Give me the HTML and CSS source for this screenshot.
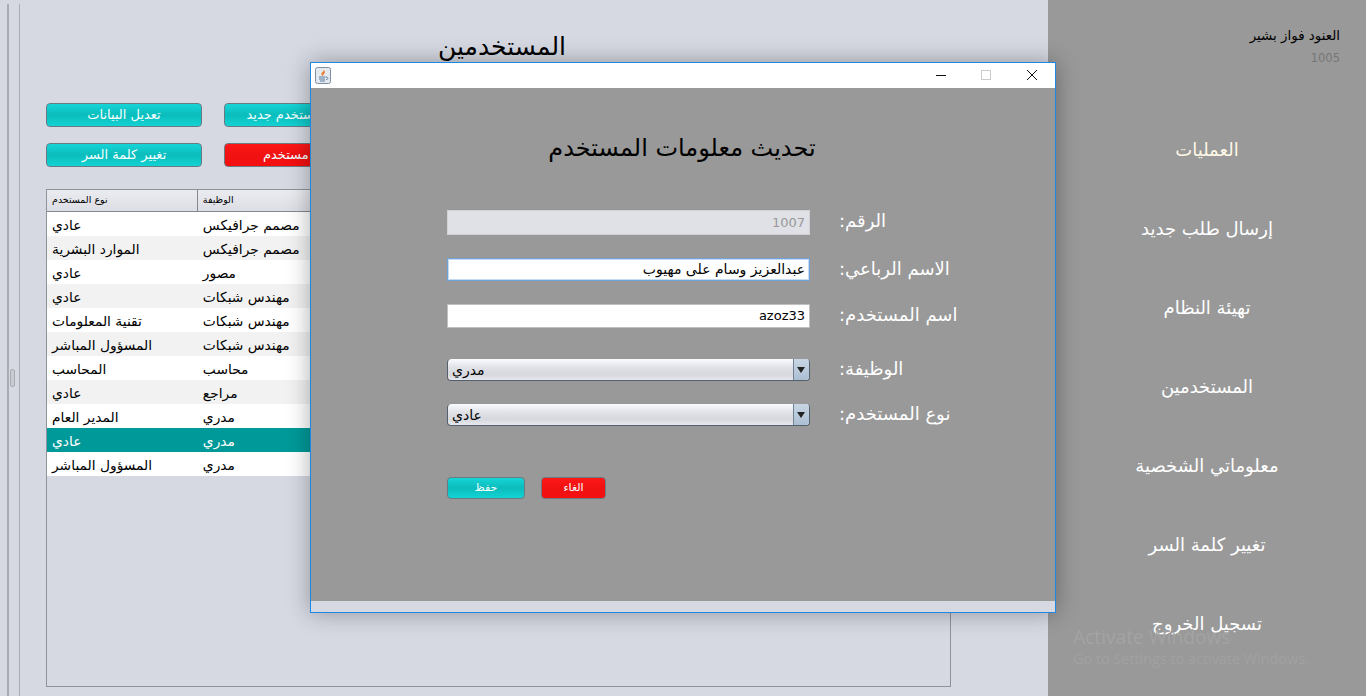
FILE: index.html
```html
<!DOCTYPE html>
<html lang="ar">
<head>
<meta charset="utf-8">
<title>المستخدمين</title>
<link rel="stylesheet" href="styles.css">
</head>
<body>
<div class="app">
  <div class="strip"><span class="grip"></span></div>
  <main class="main">
    <h1 class="page-title">المستخدمين</h1>
    <div class="actions">
      <div class="btn teal">تعديل البيانات</div>
      <div class="btn teal">إضافة مستخدم جديد</div>
      <div class="btn teal">تغيير كلمة السر</div>
      <div class="btn red">حذف مستخدم</div>
    </div>
    <div class="table">
      <div class="thead"><div class="th">نوع المستخدم</div><div class="th">الوظيفة</div></div>
      <div class="row"><div class="cell">عادي</div><div class="cell">مصمم جرافيكس</div></div>
      <div class="row"><div class="cell">الموارد البشرية</div><div class="cell">مصمم جرافيكس</div></div>
      <div class="row"><div class="cell">عادي</div><div class="cell">مصور</div></div>
      <div class="row"><div class="cell">عادي</div><div class="cell">مهندس شبكات</div></div>
      <div class="row"><div class="cell">تقنية المعلومات</div><div class="cell">مهندس شبكات</div></div>
      <div class="row"><div class="cell">المسؤول المباشر</div><div class="cell">مهندس شبكات</div></div>
      <div class="row"><div class="cell">المحاسب</div><div class="cell">محاسب</div></div>
      <div class="row"><div class="cell">عادي</div><div class="cell">مراجع</div></div>
      <div class="row"><div class="cell">المدير العام</div><div class="cell">مدري</div></div>
      <div class="row selected"><div class="cell">عادي</div><div class="cell">مدري</div></div>
      <div class="row"><div class="cell">المسؤول المباشر</div><div class="cell">مدري</div></div>
    </div>
  </main>
  <aside class="side">
    <div class="user">
      <div class="user-name">العنود فواز بشير</div>
      <div class="user-id">1005</div>
    </div>
    <nav class="menu">
      <div class="menu-item">العمليات</div>
      <div class="menu-item">إرسال طلب جديد</div>
      <div class="menu-item">تهيئة النظام</div>
      <div class="menu-item">المستخدمين</div>
      <div class="menu-item">معلوماتي الشخصية</div>
      <div class="menu-item">تغيير كلمة السر</div>
      <div class="menu-item">تسجيل الخروج</div>
    </nav>
  </aside>
</div>

<section class="dialog">
  <header class="titlebar">
    <svg class="java" width="16" height="17" viewBox="0 0 16 17">
      <rect x="0.5" y="0.5" width="15" height="16" rx="2" fill="#e4e9f0" stroke="#7d8ea3"/>
      <path d="M8.5 2.5C9.5 4.5 6 5.500 6.500 7.500C6.800 8.500 8 9 8 9C7.500 7.500 10.500 6.500 9.800 4.500Z" fill="#e8792a"/>
      <path d="M4 10h6.500M4 12h6M5 14h5" stroke="#5c7c9c" stroke-width="1"/>
      <path d="M11 10c2.500 0 2.500 2.500 0 2.500" fill="none" stroke="#5c7c9c"/>
    </svg>
    <div class="winbtns">
      <svg class="winbtn" width="46" height="24" viewBox="0 0 46 24"><path d="M19 12.500h10" stroke="#111"/></svg>
      <svg class="winbtn" width="46" height="24" viewBox="0 0 46 24"><rect x="18.500" y="7.500" width="9" height="9" fill="none" stroke="#ccc"/></svg>
      <svg class="winbtn" width="46" height="24" viewBox="0 0 46 24"><path d="M18 7l10 10M28 7L18 17" stroke="#111" fill="none"/></svg>
    </div>
  </header>
  <div class="dialog-body">
    <h2 class="dialog-title">تحديث معلومات المستخدم</h2>
    <div class="form">
      <div class="form-row r1"><div class="field disabled">1007</div><div class="label">الرقم:</div></div>
      <div class="form-row r2"><div class="field focused">عبدالعزيز وسام على مهيوب</div><div class="label">الاسم الرباعي:</div></div>
      <div class="form-row r3"><div class="field">azoz33</div><div class="label">اسم المستخدم:</div></div>
      <div class="form-row r4"><div class="combo"><span class="combo-text">مدري</span><span class="combo-arrow"></span></div><div class="label">الوظيفة:</div></div>
      <div class="form-row r5"><div class="combo"><span class="combo-text">عادي</span><span class="combo-arrow"></span></div><div class="label">نوع المستخدم:</div></div>
    </div>
    <div class="dialog-actions">
      <div class="btn small teal save">حفظ</div>
      <div class="btn small red cancel">الغاء</div>
    </div>
  </div>
  <div class="dialog-foot"></div>
</section>

<div class="watermark">
  <div class="wm-big">Activate Windows</div>
  <div class="wm-small">Go to Settings to activate Windows.</div>
</div>
</body>
</html>
```
FILE: styles.css
```css
* { box-sizing: border-box; margin: 0; padding: 0; }
html, body { width: 1366px; height: 696px; overflow: hidden; }
body { font-family: "DejaVu Sans", sans-serif; background: #d6d9e2; color: #000; position: relative; }

.app { display: flex; height: 696px; }

.strip { width: 18px; padding-top: 4px; flex: none; position: relative; }
.strip::before { content: ""; display: block; height: 692px; width: 10px; margin-left: 7px; border-left: 2px solid #a9acb2; border-right: 1px solid #a9acb2; }
.grip { position: absolute; left: 10px; top: 369px; width: 5px; height: 18px; border: 1px solid #a9acb2; border-radius: 2px; background: #c8cbd2; }

.main { width: 1030px; flex: none; padding: 0 98px 0 28px; }
.page-title { font-size: 25px; font-weight: 400; line-height: 30px; padding-top: 32px; height: 62px; text-align: center; padding-left: 8px; }
.actions { margin-top: 41px; display: grid; grid-template-columns: 156px 156px; column-gap: 22px; row-gap: 16px; }

.btn { height: 24px; border: 1px solid #6b7a80; border-radius: 4px; color: #f4ffff; font-size: 13px; line-height: 22px; text-align: center; white-space: nowrap; overflow: hidden; }
.teal { background: linear-gradient(#16d5d6, #0bbcbc 50%, #13d3d4); }
.red { background: linear-gradient(#ff1616, #f01212 50%, #f50f0f); }

.table { margin-top: 22px; width: 905px; height: 498px; border: 1px solid #8f9298; }
.thead { display: flex; height: 22px; background: linear-gradient(#ebecf0, #dcdee5); border-bottom: 1px solid #84878f; }
.th { width: 151px; font-size: 9.500px; line-height: 20px; padding-left: 5px; border-right: 1px solid #84878f; }
.th + .th { width: 753px; border-right: 0; }
.row { display: flex; height: 24px; background: #fff; font-size: 13.800px; line-height: 26px; }
.row:nth-child(odd) { background: #f2f2f2; }
.row.selected { background: #009999; color: #fff; }
.cell { width: 151px; padding-left: 5px; white-space: nowrap; }
.cell + .cell { width: 753px; }

.side { flex: 1; background: #999; display: flex; flex-direction: column; }
.user { padding: 26px 26px 0 0; text-align: right; height: 110px; }
.user-name { font-size: 13.400px; line-height: 20px; }
.user-id { font-size: 11.500px; line-height: 16px; margin-top: 4px; color: #777; }
.menu { display: flex; flex-direction: column; align-items: center; }
.menu-item { height: 79px; line-height: 79px; font-size: 18px; color: #fff; white-space: nowrap; }
.menu-item:first-child { color: #fff8e6; }

.dialog { position: absolute; left: 310px; top: 62px; width: 746px; height: 551px; border: 1px solid #1e88e5; background: #999; display: flex; flex-direction: column; box-shadow: 0 0 22px rgba(0, 0, 0, .32); }
.titlebar { height: 25px; background: #fff; display: flex; align-items: center; justify-content: space-between; padding-left: 4px; flex: none; }
.java { display: block; }
.winbtns { display: flex; align-self: flex-start; }
.winbtn { display: block; width: 46px; height: 24px; }
.dialog-body { flex: 1; padding: 0 0 0 136px; }
.dialog-title { font-size: 24px; font-weight: 400; line-height: 32px; margin-top: 44px; width: 470px; text-align: center; }
.form { margin-top: 46px; display: flex; flex-direction: column; }
.form-row { display: flex; align-items: center; gap: 29px; }
.label { font-size: 18px; line-height: 18px; color: #fff; white-space: nowrap; direction: rtl; text-align: left; padding-bottom: 2px; }
.r1 .label { padding-bottom: 4px; }
.field { width: 363px; background: #fff; border: 1px solid #c0c0c0; font-size: 14px; line-height: 20px; padding: 0 4px; direction: rtl; white-space: nowrap; }
.field.disabled { height: 25px; line-height: 23px; font-size: 13px; background: #dfe1e6; border-color: #d0d2d6; color: #999; direction: ltr; text-align: right; }
.field.focused { height: 23px; border: 1px solid #6fa3dc; box-shadow: inset 0 0 0 1px #c6dbf1; }
.r3 .field { height: 24px; line-height: 22px; font-size: 13px; direction: ltr; text-align: right; }
.r2 { margin-top: 23px; }
.r3 { margin-top: 23px; }
.r4 { margin-top: 31px; }
.r5 { margin-top: 23px; }
.combo { width: 363px; height: 22px; border: 1px solid #55606e; border-width: 0 1px 1px; border-radius: 4px; background: linear-gradient(#fafbfd, #e0e2e8 40%, #d6d8de 75%, #e8e9ee); display: flex; justify-content: space-between; align-items: center; padding-left: 4px; overflow: hidden; font-size: 14px; }
.combo-arrow { width: 16px; height: 22px; background: linear-gradient(#c8d6e4, #aabed2); border-left: 1px solid #6f8296; position: relative; }
.combo-arrow::after { content: ""; position: absolute; left: 3px; top: 8px; border: 4px solid transparent; border-top: 6px solid #222; border-bottom: 0; }
.dialog-actions { display: flex; gap: 16px; margin-top: 51px; }
.btn.small { height: 22px; font-size: 11px; line-height: 20px; }
.save { width: 78px; }
.cancel { width: 65px; }
.dialog-foot { height: 11px; background: #d6d9e2; flex: none; }

.watermark { position: absolute; left: 1073px; top: 625px; color: #a3a3a3; white-space: nowrap; font-family: "Open Sans", sans-serif; }
.wm-big { font-size: 19.200px; line-height: 24px; }
.wm-small { font-size: 14.400px; line-height: 20px; color: #a1a1a1; }
```
